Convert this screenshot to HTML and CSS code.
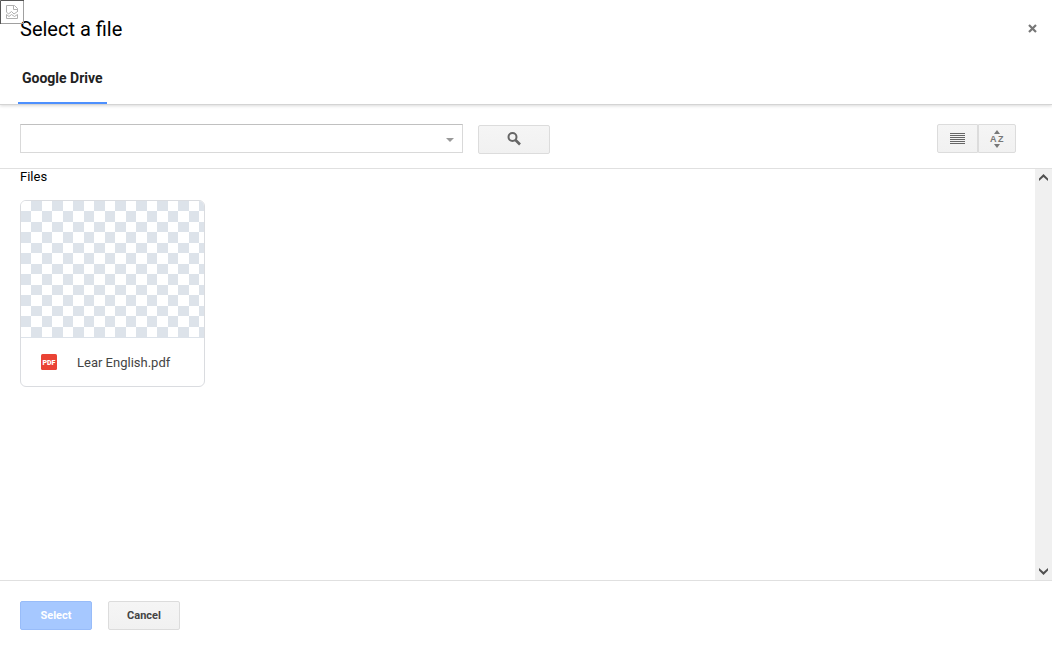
FILE: index.html
```html
<!DOCTYPE html>
<html lang="en">
<head>
<meta charset="utf-8">
<meta name="viewport" content="width=device-width, initial-scale=1">
<title>Select a file</title>
<link rel="stylesheet" href="styles.css">
</head>
<body>
<div class="picker">
  <svg class="broken-image" viewBox="0 0 24 24" aria-hidden="true">
    <path d="M0 23.5H23.5V0" fill="none" stroke="#a0a0a0"/>
    <path d="M.5 24V.5H24" fill="none" stroke="#555"/>
    <path d="M6.500 12V5.500H14.500L17.500 8.500V12M13.500 5.500V9.500H17.500M6.500 12L8.500 14L11.500 11.500L14 14L17.500 11.500M6.500 14.500V18.500H17.500V14.500L14.500 16.500L11.500 14.500L9 16.500Z" fill="none" stroke="#b0b0b0"/>
  </svg>
  <header class="header">
    <div class="title-row">
      <h1 class="title">Select a file</h1>
      <button class="close" type="button" aria-label="Close">
        <svg width="9" height="9" viewBox="0 0 9 9"><path d="M1 1L8 8M8 1L1 8" stroke="#777" stroke-width="2.200"/></svg>
      </button>
    </div>
    <nav class="tabs"><a class="tab" href="#drive">Google Drive</a></nav>
  </header>
  <div class="toolbar">
    <form class="search">
      <div class="combo">
        <input class="combo-input" type="text" aria-label="Search in Drive">
        <button class="combo-arrow" type="button" aria-label="Search options">
          <svg width="8" height="4" viewBox="0 0 8 4"><path d="M0 0H8L4 4Z" fill="#999"/></svg>
        </button>
      </div>
      <button class="button search-button" type="button" aria-label="Search">
        <svg width="14" height="14" viewBox="0 0 14 14" fill="none" stroke="#666"><circle cx="5.500" cy="5" r="4" stroke-width="2"/><path d="M8.500 8L13 12.500" stroke-width="2.600"/></svg>
      </button>
    </form>
    <div class="view-tools">
      <button class="button tool tool-list" type="button" aria-label="List view">
        <svg width="15" height="11" viewBox="0 0 15 11"><path d="M0 .5H15M0 2.500H15M0 4.500H15M0 6.500H15M0 8.500H15M0 10.500H15" stroke="#666"/></svg>
      </button>
      <button class="button tool tool-sort" type="button" aria-label="Sort">
        <svg width="16" height="18" viewBox="0 0 16 18" fill="#777"><path d="M5 4L8 0L11 4ZM5 14H11L8 18Z"/><text class="sort-text" x="1" y="12">A</text><text class="sort-text" x="9" y="12">Z</text></svg>
      </button>
    </div>
  </div>
  <div class="content">
    <main class="files" id="drive">
      <h2 class="files-title">Files</h2>
      <a class="card" href="#file">
        <span class="preview"></span>
        <span class="file">
          <svg width="16" height="16" viewBox="0 0 16 16"><rect width="16" height="16" rx="1.500" fill="#ea4335"/><text class="pdf-text" x="8" y="11" text-anchor="middle">PDF</text></svg>
          <span class="file-name">Lear English.pdf</span>
        </span>
      </a>
    </main>
    <div class="scroll-track">
      <button class="scroll-button" type="button" aria-label="Scroll up">
        <svg width="9" height="7" viewBox="0 0 9 7"><path d="M0 4.500L4.500 0L9 4.500V7L4.500 3L0 7Z" fill="#505050"/></svg>
      </button>
      <button class="scroll-button" type="button" aria-label="Scroll down">
        <svg width="9" height="7" viewBox="0 0 9 7"><path d="M0 2.500L4.500 7L9 2.500V0L4.500 4L0 0Z" fill="#505050"/></svg>
      </button>
    </div>
  </div>
  <footer class="footer">
    <button class="button primary" type="button">Select</button>
    <button class="button" type="button">Cancel</button>
  </footer>
</div>
</body>
</html>
```
FILE: styles.css
```css
* {
  box-sizing: border-box;
}

body {
  margin: 0;
  font: 13px/16px Roboto, "Liberation Sans", sans-serif;
  color: #000;
  background: #fff;
}

button {
  font: inherit;
}

svg {
  display: block;
  flex: none;
}

.picker {
  position: relative;
  display: flex;
  flex-direction: column;
  min-height: 100vh;
}

.broken-image {
  position: absolute;
  top: 0;
  left: 0;
  width: 24px;
  height: 24px;
}

.header {
  border-bottom: 1px solid #d4d4d4;
  box-shadow: 0 1px 3px rgba(0, 0, 0, 0.15);
}

.title-row {
  display: flex;
  align-items: center;
  justify-content: space-between;
  padding: 16px 11px 10px 20px;
}

.title {
  margin: 0;
  font-size: 20px;
  line-height: 26px;
  font-weight: 400;
}

.close {
  display: flex;
  padding: 4px 4px 6px;
  border: 0;
  background: none;
}

.tabs {
  display: flex;
  padding: 0 18px;
}

.tab {
  padding: 17px 4px 15px;
  border-bottom: 2px solid #4d90fe;
  font-size: 14px;
  line-height: 18px;
  font-weight: 700;
  color: #222;
  text-decoration: none;
}

.toolbar {
  display: flex;
  align-items: flex-start;
  justify-content: space-between;
  padding: 19px 36px 14px 20px;
  border-bottom: 1px solid #e0e0e0;
}

.search {
  display: flex;
  align-items: flex-start;
  flex: 0 1 530px;
  gap: 15px;
}

.combo {
  display: flex;
  flex: 1;
  height: 29px;
  border: 1px solid #d9d9d9;
  border-top-color: #c0c0c0;
}

.combo-input {
  flex: 1;
  min-width: 0;
  padding: 0 8px;
  border: 0;
  font: inherit;
  background: none;
}

.combo-arrow {
  display: flex;
  align-items: center;
  padding: 3px 8px 0;
  border: 0;
  background: none;
}

.button {
  display: flex;
  align-items: center;
  justify-content: center;
  min-width: 72px;
  height: 29px;
  padding: 0 8px;
  border: 1px solid #dcdcdc;
  border-radius: 2px;
  background: linear-gradient(#f5f5f5, #f1f1f1);
  font-size: 11px;
  font-weight: 700;
  color: #444;
}

.search-button {
  margin-top: 1px;
  padding-bottom: 1px;
}

.view-tools {
  display: flex;
}

.tool {
  min-width: 0;
}

.tool-list {
  width: 41px;
  border-radius: 2px 0 0 2px;
}

.tool-sort {
  width: 38px;
  border-radius: 0 2px 2px 0;
}

.sort-text {
  font-family: "Liberation Sans", sans-serif;
  font-size: 9px;
  font-weight: 700;
}

.content {
  display: flex;
  flex: 1;
}

.files {
  flex: 1;
  padding: 0 20px;
}

.files-title {
  margin: 0 0 15px;
  font-size: 13px;
  line-height: 16px;
  font-weight: 400;
}

.card {
  display: block;
  width: 185px;
  overflow: hidden;
  border: 1px solid #dadce0;
  border-radius: 6px;
  color: #444;
  text-decoration: none;
}

.preview {
  display: block;
  height: 137px;
  border-bottom: 1px solid #dde3ea;
  background: conic-gradient(at 10px 10px, #dde3ea 25%, #fff 0 50%, #dde3ea 0 75%, #fff 0) 0 0 / 21px 21px;
}

.file {
  display: flex;
  align-items: center;
  gap: 20px;
  height: 48px;
  padding: 0 20px;
}

.file-name {
  padding-top: 2px;
}

.pdf-text {
  font-size: 7px;
  font-weight: 900;
  fill: #fff;
}

.scroll-track {
  display: flex;
  flex-direction: column;
  justify-content: space-between;
  width: 17px;
  background: #f0f0f0;
}

.scroll-button {
  display: flex;
  align-items: center;
  justify-content: center;
  height: 17px;
  padding: 0;
  border: 0;
  background: none;
}

.footer {
  display: flex;
  gap: 16px;
  padding: 20px;
  border-top: 1px solid #e0e0e0;
}

.primary {
  border-color: #98bcf9;
  background: #a6c8ff;
  color: #fff;
}
```
